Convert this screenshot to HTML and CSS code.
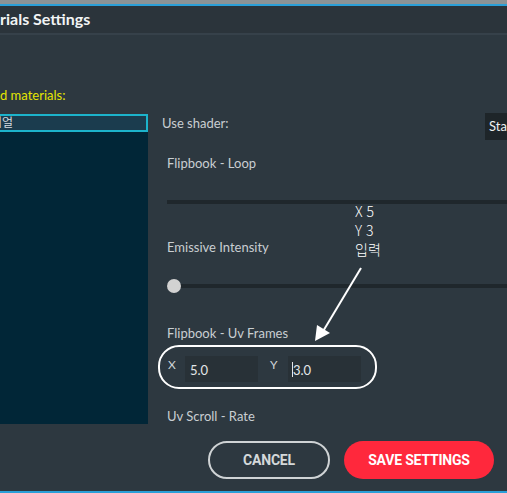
FILE: index.html
```html
<!DOCTYPE html>
<html lang="ko">
<head>
    <meta charset="UTF-8">
    <meta name="viewport" content="width=device-width, initial-scale=1.0">
    <title>Materials Settings</title>
    <link rel="stylesheet" href="styles.css">
</head>
<body>
    <div class="backdrop-strip"></div>
    <div class="dialog">
        <div class="dialog-header">
            <h1>rials Settings</h1>
        </div>
        <div class="dialog-body">
            <div class="left-col">
                <p class="list-label">d materials:</p>
                <div class="list-item selected"><span>리얼</span></div>
                <div class="list-panel"></div>
            </div>
            <div class="right-col">
                <div class="shader-row">
                    <span class="field-label">Use shader:</span>
                    <div class="dropdown">Sta</div>
                </div>
                <p class="prop-label loop-label">Flipbook - Loop</p>
                <div class="track"></div>
                <p class="prop-label">Emissive Intensity</p>
                <div class="track with-knob"><span class="knob"></span></div>
                <p class="prop-label">Flipbook - Uv Frames</p>
                <div class="uv-row">
                    <span class="axis">X</span>
                    <div class="num-input">5.0</div>
                    <span class="axis">Y</span>
                    <div class="num-input"><span class="caret"></span>3.0</div>
                </div>
                <p class="prop-label scroll-label">Uv Scroll - Rate</p>
            </div>
        </div>
        <div class="dialog-footer">
            <button class="btn btn-cancel">CANCEL</button>
            <button class="btn btn-save">SAVE SETTINGS</button>
        </div>
    </div>

    <!-- annotation drawn over the screenshot -->
    <div class="note-text">X 5<br>Y 3<br>입력</div>
    <svg class="note-marks" width="507" height="493" viewBox="0 0 507 493">
        <rect x="159" y="346" width="217" height="42" rx="20" fill="none" stroke="#fff" stroke-width="2"/>
        <line x1="361" y1="268" x2="322" y2="333" stroke="#fff" stroke-width="2"/>
        <polygon points="315,341 317,325 330,333" fill="#fff"/>
    </svg>
</body>
</html>
```

FILE: styles.css
```css
body {
    margin: 0;
    width: 507px;
    height: 493px;
    overflow: hidden;
    position: relative;
    background-color: #2d3840;
    font-family: Lato, "Noto Sans CJK KR", sans-serif;
    color: #c9ced2;
}
.backdrop-strip {
    height: 4px;
    background-color: #8c9396;
    border-bottom: 2px solid #2a9fd8;
}
.dialog {
    height: 485px;
    display: flex;
    flex-direction: column;
    border-bottom: 2px solid #2a9fd8;
}
.dialog-header {
    height: 27px;
    background-color: #2b343b;
    border-bottom: 2px solid #36414a;
}
.dialog-header h1 {
    margin: 0;
    font-size: 16px;
    font-weight: 700;
    line-height: 26px;
    color: #f2f4f5;
}
.dialog-body {
    display: flex;
    gap: 14px;
}
.left-col {
    width: 148px;
    flex-shrink: 0;
}
.list-label {
    margin: 52px 0 0;
    font-size: 13px;
    line-height: 16px;
    color: #e6e600;
}
.list-item {
    height: 14px;
    margin-top: 11px;
    border: 2px solid #1cb4cc;
    border-left: none;
    background-color: #1b3c4e;
    overflow: hidden;
    font-size: 12px;
    line-height: 14px;
    color: #d8dde0;
}
.list-item span {
    display: inline-block;
    margin-left: -9px;
}
.list-panel {
    height: 292px;
    background-color: #012637;
}
.right-col {
    flex: 1;
    min-width: 0;
    display: flex;
    flex-direction: column;
}
.shader-row {
    display: flex;
    align-items: flex-start;
    margin-top: 78px;
    height: 27px;
}
.field-label {
    font-size: 13px;
    line-height: 18px;
    padding-top: 1px;
    width: 324px;
}
.dropdown {
    flex: 1;
    background-color: #1e2529;
    color: #eef0f1;
    font-size: 13px;
    line-height: 27px;
    padding-left: 4px;
    white-space: nowrap;
}
.prop-label {
    margin: 0;
    padding-left: 5px;
    font-size: 13px;
    line-height: 16px;
}
.loop-label {
    margin-top: 15px;
}
.track {
    height: 4px;
    margin: 29px 0 0 5px;
    background-color: #1f272c;
    position: relative;
}
.track + .prop-label {
    margin-top: 35px;
}
.with-knob {
    margin-top: 29px;
}
.knob {
    position: absolute;
    left: 0;
    top: -5px;
    width: 14px;
    height: 14px;
    border-radius: 50%;
    background-color: #d2d2d2;
}
.with-knob + .prop-label {
    margin-top: 37px;
}
.uv-row {
    display: flex;
    align-items: flex-start;
    margin-top: 15px;
    height: 26px;
}
.axis {
    font-size: 12px;
    line-height: 14px;
    padding-top: 2px;
    color: #cfd4d7;
}
.axis:first-child {
    margin-left: 6px;
    width: 17px;
}
.axis:nth-child(3) {
    margin-left: 12px;
    width: 18px;
}
.num-input {
    width: 68px;
    height: 26px;
    padding-left: 5px;
    background-color: #283137;
    font-size: 13px;
    line-height: 28px;
    color: #e3e6e8;
    position: relative;
}
.caret {
    position: absolute;
    left: 4px;
    top: 6px;
    width: 1px;
    height: 15px;
    background-color: #e3e6e8;
}
.scroll-label {
    margin-top: 26px;
}
.dialog-footer {
    display: flex;
    justify-content: flex-end;
    gap: 14px;
    padding-right: 13px;
    margin-top: auto;
    margin-bottom: 12px;
}
.btn {
    height: 38px;
    border-radius: 19px;
    font-family: Roboto, sans-serif;
    font-size: 14px;
    font-weight: 700;
    letter-spacing: -0.2px;
    cursor: pointer;
}
.btn-cancel {
    width: 122px;
    background: none;
    border: 2px solid #cfd3d5;
    color: #d4d8da;
}
.btn-save {
    width: 150px;
    background-color: #ff283c;
    border: none;
    color: #ffffff;
}
.note-text {
    position: absolute;
    left: 355px;
    top: 202px;
    font-family: "Noto Sans CJK KR", sans-serif;
    font-size: 14px;
    font-weight: 300;
    line-height: 19px;
    color: #ffffff;
}
.note-marks {
    position: absolute;
    left: 0;
    top: 0;
    pointer-events: none;
}
```
